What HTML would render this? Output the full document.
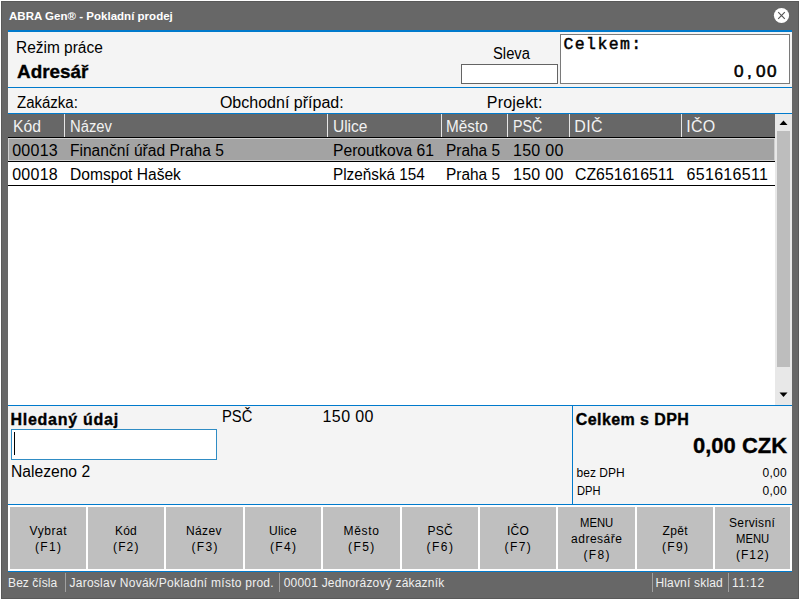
<!DOCTYPE html>
<html><head><meta charset="utf-8"><style>
html,body{margin:0;padding:0;width:800px;height:600px;overflow:hidden;background:#676767}
.r{position:absolute}
.t{position:absolute;white-space:pre;font-family:"Liberation Sans",sans-serif;color:#000}
</style></head><body>
<div class="r" style="left:0px;top:0px;width:800px;height:600px;background:#ffffff;"></div>
<div class="r" style="left:1px;top:1px;width:798px;height:598px;background:#595959;"></div>
<div class="r" style="left:2px;top:2px;width:796px;height:596px;background:#676767;"></div>
<div class="r" style="left:8px;top:30px;width:784px;height:2px;background:#007acc;"></div>
<div class="r" style="left:8px;top:32px;width:784px;height:55px;background:#f4f4f4;"></div>
<div class="r" style="left:8px;top:87px;width:784px;height:1px;background:#007acc;"></div>
<div class="r" style="left:8px;top:88px;width:784px;height:25px;background:#f4f4f4;"></div>
<div class="r" style="left:8px;top:113px;width:784px;height:1px;background:#007acc;"></div>
<div class="r" style="left:461px;top:64px;width:97px;height:20px;background:#646464;"></div>
<div class="r" style="left:462px;top:65px;width:95px;height:18px;background:#fff;"></div>
<div class="r" style="left:560px;top:34px;width:230px;height:50px;background:#7a7a7a;"></div>
<div class="r" style="left:561px;top:35px;width:228px;height:48px;background:#fff;"></div>
<div class="r" style="left:8px;top:114px;width:767px;height:23px;background:#676767;"></div>
<div class="r" style="left:64px;top:114px;width:1px;height:23px;background:#e6e6e6;"></div>
<div class="r" style="left:327px;top:114px;width:1px;height:23px;background:#e6e6e6;"></div>
<div class="r" style="left:441px;top:114px;width:1px;height:23px;background:#e6e6e6;"></div>
<div class="r" style="left:507px;top:114px;width:1px;height:23px;background:#e6e6e6;"></div>
<div class="r" style="left:569px;top:114px;width:1px;height:23px;background:#e6e6e6;"></div>
<div class="r" style="left:681px;top:114px;width:1px;height:23px;background:#e6e6e6;"></div>
<div class="r" style="left:8px;top:137px;width:767px;height:268px;background:#fff;"></div>
<div class="r" style="left:8px;top:137px;width:767px;height:1px;background:#000;"></div>
<div class="r" style="left:8px;top:138px;width:767px;height:23px;background:#cfcfcf;"></div>
<div class="r" style="left:9px;top:139px;width:765px;height:21px;background:#a3a3a3;"></div>
<div class="r" style="left:8px;top:161px;width:767px;height:1px;background:#000;"></div>
<div class="r" style="left:8px;top:185px;width:767px;height:1px;background:#000;"></div>
<div class="r" style="left:775px;top:114px;width:17px;height:291px;background:#e8e8e8;"></div>
<div class="r" style="left:777px;top:131px;width:13px;height:236px;background:#bdbdbd;"></div>
<div class="r" style="left:8px;top:405px;width:784px;height:1px;background:#007acc;"></div>
<div class="r" style="left:8px;top:406px;width:784px;height:98px;background:#f4f4f4;"></div>
<div class="r" style="left:572px;top:406px;width:1px;height:98px;background:#007acc;"></div>
<div class="r" style="left:11px;top:429px;width:206px;height:31px;background:#2f8cc4;"></div>
<div class="r" style="left:12px;top:430px;width:204px;height:29px;background:#fff;"></div>
<div class="r" style="left:14px;top:432px;width:1px;height:23px;background:#000;"></div>
<div class="r" style="left:8px;top:504px;width:784px;height:1px;background:#007acc;"></div>
<div class="r" style="left:8px;top:505px;width:784px;height:66px;background:#fff;"></div>
<div class="r" style="left:10px;top:507px;width:76px;height:62px;background:#bfbfbf;"></div>
<div class="r" style="left:88px;top:507px;width:76px;height:62px;background:#bfbfbf;"></div>
<div class="r" style="left:166px;top:507px;width:77px;height:62px;background:#bfbfbf;"></div>
<div class="r" style="left:245px;top:507px;width:76px;height:62px;background:#bfbfbf;"></div>
<div class="r" style="left:323px;top:507px;width:77px;height:62px;background:#bfbfbf;"></div>
<div class="r" style="left:402px;top:507px;width:76px;height:62px;background:#bfbfbf;"></div>
<div class="r" style="left:480px;top:507px;width:76px;height:62px;background:#bfbfbf;"></div>
<div class="r" style="left:558px;top:507px;width:77px;height:62px;background:#bfbfbf;"></div>
<div class="r" style="left:637px;top:507px;width:76px;height:62px;background:#bfbfbf;"></div>
<div class="r" style="left:715px;top:507px;width:75px;height:62px;background:#bfbfbf;"></div>
<div class="r" style="left:8px;top:571px;width:784px;height:1px;background:#007acc;"></div>
<div class="r" style="left:65px;top:573px;width:1px;height:19px;background:#a0a0a0;"></div>
<div class="r" style="left:279px;top:573px;width:1px;height:19px;background:#a0a0a0;"></div>
<div class="r" style="left:652px;top:573px;width:1px;height:19px;background:#a0a0a0;"></div>
<div class="r" style="left:728px;top:573px;width:1px;height:19px;background:#a0a0a0;"></div>
<svg class="r" style="left:775px;top:114px" width="17" height="291">
<polygon points="4.5,11 12.5,11 8.5,6.5" fill="#000"/>
<polygon points="4.5,278.5 12.5,278.5 8.5,283" fill="#000"/>
</svg>
<svg class="r" style="left:772px;top:6px" width="20" height="20">
<circle cx="9.5" cy="9.5" r="7.6" fill="#fff"/>
<path d="M6.2 6.2 L12.8 12.8 M12.8 6.2 L6.2 12.8" stroke="#555" stroke-width="1.15" fill="none"/>
</svg>
<div class="t" style="left:9.00px;top:11.00px;font-size:11.5px;line-height:11.5px;font-weight:700;color:#fff;letter-spacing:0.019px">ABRA Gen® - Pokladní prodej</div>
<div class="t" style="left:15.78px;top:40.00px;font-size:16px;line-height:16px;transform:scaleX(0.9659);transform-origin:0 0">Režim práce</div>
<div class="t" style="left:16.50px;top:61.50px;font-size:19px;line-height:19px;font-weight:700;-webkit-text-stroke:0.35px currentColor;transform:scaleX(0.9931);transform-origin:0 0">Adresář</div>
<div class="t" style="left:492.58px;top:46.00px;font-size:16px;line-height:16px;transform:scaleX(0.9231);transform-origin:0 0">Sleva</div>
<div class="t" style="left:563.50px;top:36.80px;font-size:16.5px;line-height:16.5px;font-family:'Liberation Mono';letter-spacing:1.4px;-webkit-text-stroke:0.45px currentColor">Celkem:</div>
<div class="t" style="left:734.00px;top:63.00px;font-size:16.5px;line-height:16.5px;-webkit-text-stroke:0.55px currentColor;transform:scaleX(1.04);transform-origin:0 0">0</div>
<div class="t" style="left:746.60px;top:63.00px;font-size:16.5px;line-height:16.5px;-webkit-text-stroke:0.55px currentColor;transform:scaleX(1.04);transform-origin:0 0">,</div>
<div class="t" style="left:755.70px;top:63.00px;font-size:16.5px;line-height:16.5px;-webkit-text-stroke:0.55px currentColor;transform:scaleX(1.04);transform-origin:0 0">0</div>
<div class="t" style="left:767.40px;top:63.00px;font-size:16.5px;line-height:16.5px;-webkit-text-stroke:0.55px currentColor;transform:scaleX(1.04);transform-origin:0 0">0</div>
<div class="t" style="left:16.50px;top:94.50px;font-size:16px;line-height:16px;transform:scaleX(0.9375);transform-origin:0 0">Zakázka:</div>
<div class="t" style="left:219.90px;top:94.50px;font-size:16px;line-height:16px;letter-spacing:0.013px">Obchodní případ:</div>
<div class="t" style="left:486.80px;top:94.50px;font-size:16px;line-height:16px;letter-spacing:0.2px">Projekt:</div>
<div class="t" style="left:12.72px;top:118.70px;font-size:16px;line-height:16px;color:#f2f2f2;transform:scaleX(0.9815);transform-origin:0 0">Kód</div>
<div class="t" style="left:69.78px;top:118.70px;font-size:16px;line-height:16px;color:#f2f2f2;transform:scaleX(0.9250);transform-origin:0 0">Název</div>
<div class="t" style="left:332.73px;top:118.70px;font-size:16px;line-height:16px;color:#f2f2f2;transform:scaleX(0.9676);transform-origin:0 0">Ulice</div>
<div class="t" style="left:446.44px;top:118.70px;font-size:16px;line-height:16px;color:#f2f2f2;transform:scaleX(0.9571);transform-origin:0 0">Město</div>
<div class="t" style="left:512.71px;top:118.70px;font-size:16px;line-height:16px;color:#f2f2f2;transform:scaleX(0.8903);transform-origin:0 0">PSČ</div>
<div class="t" style="left:574.30px;top:118.70px;font-size:16px;line-height:16px;color:#f2f2f2;letter-spacing:0.35px">DIČ</div>
<div class="t" style="left:686.20px;top:118.70px;font-size:16px;line-height:16px;color:#f2f2f2;letter-spacing:0.25px">IČO</div>
<div class="t" style="left:12.20px;top:142.50px;font-size:16px;line-height:16px;letter-spacing:0.25px">00013</div>
<div class="t" style="left:69.93px;top:142.50px;font-size:16px;line-height:16px;transform:scaleX(0.9720);transform-origin:0 0">Finanční úřad Praha 5</div>
<div class="t" style="left:332.72px;top:142.50px;font-size:16px;line-height:16px;transform:scaleX(0.9784);transform-origin:0 0">Peroutkova 61</div>
<div class="t" style="left:446.44px;top:142.50px;font-size:16px;line-height:16px;transform:scaleX(0.9636);transform-origin:0 0">Praha 5</div>
<div class="t" style="left:513.00px;top:142.50px;font-size:16px;line-height:16px;letter-spacing:0.28px">150 00</div>
<div class="t" style="left:12.20px;top:166.50px;font-size:16px;line-height:16px;letter-spacing:0.25px">00018</div>
<div class="t" style="left:69.93px;top:166.50px;font-size:16px;line-height:16px;transform:scaleX(0.9743);transform-origin:0 0">Domspot Hašek</div>
<div class="t" style="left:332.74px;top:166.50px;font-size:16px;line-height:16px;transform:scaleX(0.9558);transform-origin:0 0">Plzeňská 154</div>
<div class="t" style="left:446.44px;top:166.50px;font-size:16px;line-height:16px;transform:scaleX(0.9636);transform-origin:0 0">Praha 5</div>
<div class="t" style="left:513.00px;top:166.50px;font-size:16px;line-height:16px;letter-spacing:0.28px">150 00</div>
<div class="t" style="left:575.01px;top:166.50px;font-size:16px;line-height:16px;transform:scaleX(0.9899);transform-origin:0 0">CZ651616511</div>
<div class="t" style="left:686.50px;top:166.50px;font-size:16px;line-height:16px;letter-spacing:0.312px">651616511</div>
<div class="t" style="left:10.50px;top:411.50px;font-size:16px;line-height:16px;font-weight:700;letter-spacing:0.736px;-webkit-text-stroke:0.35px currentColor">Hledaný údaj</div>
<div class="t" style="left:222.08px;top:409.00px;font-size:16px;line-height:16px;transform:scaleX(0.9226);transform-origin:0 0">PSČ</div>
<div class="t" style="left:322.60px;top:409.00px;font-size:16px;line-height:16px;letter-spacing:0.38px">150 00</div>
<div class="t" style="left:10.52px;top:463.50px;font-size:16px;line-height:16px;transform:scaleX(0.9772);transform-origin:0 0">Nalezeno 2</div>
<div class="t" style="left:575.80px;top:412.00px;font-size:16px;line-height:16px;font-weight:700;letter-spacing:0.409px;-webkit-text-stroke:0.35px currentColor">Celkem s DPH</div>
<div class="t" style="left:692.80px;top:434.50px;font-size:22px;line-height:22px;font-weight:700;-webkit-text-stroke:0.35px currentColor;transform:scaleX(0.9989);transform-origin:0 0">0,00 CZK</div>
<div class="t" style="left:576.50px;top:467.00px;font-size:12px;line-height:12px;letter-spacing:0.033px">bez DPH</div>
<div class="t" style="left:762.50px;top:467.00px;font-size:12px;line-height:12px;letter-spacing:0.233px">0,00</div>
<div class="t" style="left:576.58px;top:485.00px;font-size:12px;line-height:12px;transform:scaleX(0.9250);transform-origin:0 0">DPH</div>
<div class="t" style="left:762.50px;top:485.00px;font-size:12px;line-height:12px;letter-spacing:0.233px">0,00</div>
<div class="t" style="left:29.50px;top:525.00px;font-size:12px;line-height:12px;letter-spacing:0.58px">Vybrat</div>
<div class="t" style="left:35.00px;top:541.00px;font-size:12px;line-height:12px;letter-spacing:1.3px">(F1)</div>
<div class="t" style="left:115.00px;top:525.00px;font-size:12px;line-height:12px;letter-spacing:0.2px">Kód</div>
<div class="t" style="left:113.00px;top:541.00px;font-size:12px;line-height:12px;letter-spacing:1.133px">(F2)</div>
<div class="t" style="left:186.00px;top:525.00px;font-size:12px;line-height:12px;letter-spacing:0.375px">Název</div>
<div class="t" style="left:191.50px;top:541.00px;font-size:12px;line-height:12px;letter-spacing:1.333px">(F3)</div>
<div class="t" style="left:269.00px;top:525.00px;font-size:12px;line-height:12px;letter-spacing:0.25px">Ulice</div>
<div class="t" style="left:270.00px;top:541.00px;font-size:12px;line-height:12px;letter-spacing:1.333px">(F4)</div>
<div class="t" style="left:343.50px;top:525.00px;font-size:12px;line-height:12px;letter-spacing:0.675px">Město</div>
<div class="t" style="left:348.00px;top:541.00px;font-size:12px;line-height:12px;letter-spacing:1.433px">(F5)</div>
<div class="t" style="left:427.50px;top:525.00px;font-size:12px;line-height:12px;letter-spacing:0.2px">PSČ</div>
<div class="t" style="left:426.50px;top:541.00px;font-size:12px;line-height:12px;letter-spacing:1.5px">(F6)</div>
<div class="t" style="left:507.00px;top:525.00px;font-size:12px;line-height:12px;letter-spacing:0.25px">IČO</div>
<div class="t" style="left:504.50px;top:541.00px;font-size:12px;line-height:12px;letter-spacing:1.433px">(F7)</div>
<div class="t" style="left:579.56px;top:517.00px;font-size:12px;line-height:12px;transform:scaleX(0.9412);transform-origin:0 0">MENU</div>
<div class="t" style="left:571.00px;top:533.00px;font-size:12px;line-height:12px;letter-spacing:0.514px">adresáře</div>
<div class="t" style="left:583.50px;top:549.00px;font-size:12px;line-height:12px;letter-spacing:1.333px">(F8)</div>
<div class="t" style="left:662.50px;top:525.00px;font-size:12px;line-height:12px;letter-spacing:0.333px">Zpět</div>
<div class="t" style="left:662.00px;top:541.00px;font-size:12px;line-height:12px;letter-spacing:1.333px">(F9)</div>
<div class="t" style="left:729.00px;top:517.00px;font-size:12px;line-height:12px;letter-spacing:0.357px">Servisní</div>
<div class="t" style="left:735.56px;top:533.00px;font-size:12px;line-height:12px;transform:scaleX(0.9412);transform-origin:0 0">MENU</div>
<div class="t" style="left:736.00px;top:549.00px;font-size:12px;line-height:12px;letter-spacing:1.0px">(F12)</div>
<div class="t" style="left:8.10px;top:577.00px;font-size:12px;line-height:12px;color:#f0f0f0;letter-spacing:0.037px">Bez čísla</div>
<div class="t" style="left:69.50px;top:577.00px;font-size:12px;line-height:12px;color:#f0f0f0;letter-spacing:0.256px">Jaroslav Novák/Pokladní místo prod.</div>
<div class="t" style="left:283.75px;top:577.00px;font-size:12px;line-height:12px;color:#f0f0f0;letter-spacing:0.2px">00001 Jednorázový zákazník</div>
<div class="t" style="left:655.40px;top:577.00px;font-size:12px;line-height:12px;color:#f0f0f0;letter-spacing:0.182px">Hlavní sklad</div>
<div class="t" style="left:732.00px;top:577.00px;font-size:12px;line-height:12px;color:#f0f0f0;letter-spacing:0.75px">11:12</div>
</body></html>
